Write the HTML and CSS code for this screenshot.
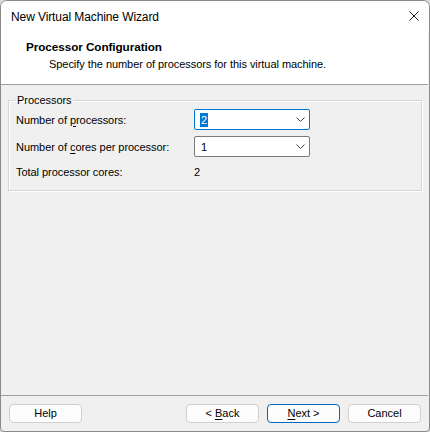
FILE: index.html
```html
<!DOCTYPE html>
<html>
<head>
<meta charset="utf-8">
<link rel="stylesheet" href="styles.css">
</head>
<body>
<div class="window">
  <div class="titlebar">
    <span class="title">New Virtual Machine Wizard</span>
    <svg class="close" width="10" height="10" viewBox="0 0 10 10"><path d="M0.5 0.5 L9.5 9.5 M9.5 0.5 L0.5 9.5" stroke="#1c1c1c" stroke-width="1" fill="none"/></svg>
  </div>
  <div class="header">
    <div class="h-title">Processor Configuration</div>
    <div class="h-sub">Specify the number of processors for this virtual machine.</div>
  </div>
  <div class="body">
    <fieldset class="group">
      <legend>Processors</legend>
      <div class="grid">
        <span class="label">Number of <u>p</u>rocessors:</span>
        <div class="combo focused"><span class="sel">2</span><svg class="chev" width="9" height="5" viewBox="0 0 9 5"><path d="M0.5 0.5 L4.5 4.5 L8.5 0.5" stroke="#404040" fill="none"/></svg></div>
        <span class="label">Number of <u>c</u>ores per processor:</span>
        <div class="combo"><span class="val">1</span><svg class="chev" width="9" height="5" viewBox="0 0 9 5"><path d="M0.5 0.5 L4.5 4.5 L8.5 0.5" stroke="#404040" fill="none"/></svg></div>
        <span class="label">Total processor cores:</span>
        <span class="total">2</span>
      </div>
    </fieldset>
  </div>
  <div class="footer">
    <button class="btn">Help</button>
    <div class="spacer"></div>
    <button class="btn">&lt; <u>B</u>ack</button>
    <button class="btn default"><u>N</u>ext &gt;</button>
    <button class="btn">Cancel</button>
  </div>
</div>
</body>
</html>
```

FILE: styles.css
```css
* { box-sizing: border-box; }
html, body { margin: 0; padding: 0; background: #d8d8d8; }
body { font-family: "Liberation Sans", Arial, sans-serif; font-size: 11px; letter-spacing: -0.05px; color: #000; }

.window {
  width: 430px;
  height: 432px;
  background: #f0f0f0;
  border: 1px solid #8a8a8a;
  border-radius: 7px 7px 4px 4px;
  overflow: hidden;
  display: flex;
  flex-direction: column;
}

.titlebar {
  height: 31px;
  background: #fff;
  display: flex;
  align-items: center;
  padding: 0 10px 0 10px;
}
.title { flex: 1; font-size: 12px; letter-spacing: -0.1px; line-height: 16px; padding-top: 1px; white-space: nowrap; }
.close { margin-top: -1px; }

.header {
  background: #fff;
  height: 53px;
  border-bottom: 1px solid #a0a0a0;
  margin-right: 1px;
  padding: 7px 0 0 25px;
}
.h-title { font-weight: bold; font-size: 11.7px; line-height: 16px; white-space: nowrap; }
.h-sub { line-height: 16px; padding-left: 23px; margin-top: 1px; white-space: nowrap; }

.body {
  flex: 1;
  padding: 7px 7px 0 7px;
}

.group {
  margin: 0;
  padding: 1px 7px 9px 7px;
  border: 1px solid #d6d6d6;
  box-shadow: inset 1px 1px 0 #fff, 1px 1px 0 #fff;
}
.group legend {
  padding: 0 1px;
  line-height: 16px;
}

.grid {
  display: grid;
  grid-template-columns: 178px 116px;
  grid-template-rows: 21px 21px 18px;
  row-gap: 6px;
  align-items: center;
}
.label { line-height: 16px; white-space: nowrap; }
.label u, .btn u { text-decoration-thickness: 1px; text-underline-offset: 2px; }

.combo {
  height: 21px;
  background: #fff;
  border: 1px solid #7a7a7a;
  border-radius: 2px;
  display: flex;
  align-items: center;
  justify-content: space-between;
  padding: 0 4px 0 5px;
}
.combo.focused { border-color: #0078d4; }
.sel { background: #0078d7; color: #fff; line-height: 14px; padding: 0 1px; }
.val { line-height: 14px; padding-left: 1px; }
.total { padding-left: 0; line-height: 16px; }

.footer {
  height: 36px;
  border-top: 1px solid #a0a0a0;
  margin-right: 1px;
  display: flex;
  align-items: flex-start;
  padding: 8px 7px 0 8px;
  gap: 8px;
}
.spacer { flex: 1; }
.btn {
  width: 73px;
  height: 19px;
  background: #fdfdfd;
  border: 1px solid #d0d0d0;
  border-radius: 4px;
  font: inherit;
  line-height: 15px;
  padding: 0;
  color: #000;
}
.btn.default { border-color: #0067c0; }
```
